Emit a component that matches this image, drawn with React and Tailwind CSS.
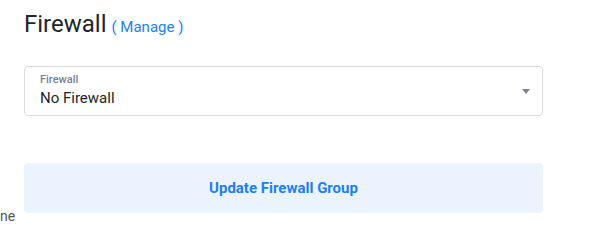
import React from "react";

export default function App() {
  return (
    <div className="relative w-[591px] h-[237px] overflow-hidden bg-white font-['Roboto',sans-serif]">
      {/* tail of a text from the neighbouring column */}
      <span className="absolute left-0 top-[207px] text-[14px] leading-[18px] text-[#555]">ne</span>

      <div className="pl-6 pr-12 pt-[10px]">
        <div className="flex items-baseline gap-[5px]">
          <h2 className="text-[24px] leading-[29px] text-[#212529]">Firewall</h2>
          <button type="button" className="text-[15px] text-[#1a82f7]">( Manage )</button>
        </div>

        <div className="mt-[27px] relative h-[50px] rounded-[4px] border border-[#dadce0] px-[15px] pt-[6px]">
          <div className="text-[11px] leading-[13px] font-medium text-[#7b8093]">Firewall</div>
          <div className="text-[15px] leading-[20px] mt-[2px] text-[#212529]">No Firewall</div>
          <svg className="absolute right-[12px] top-[22px]" width="8" height="6" viewBox="0 0 8 6">
            <path d="M0 0h8L4 5z" fill="#7b8093" />
          </svg>
        </div>

        <button
          type="button"
          className="mt-[47px] w-full h-[50px] rounded-[4px] bg-[#ebf3fe] text-[15px] font-bold text-[#1a7ff5]"
        >
          Update Firewall Group
        </button>
      </div>
    </div>
  );
}
